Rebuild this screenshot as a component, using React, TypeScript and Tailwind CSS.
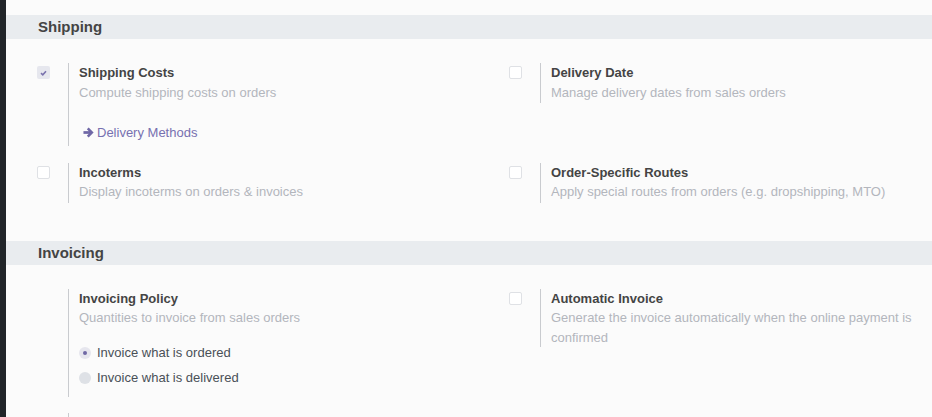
import type { ReactNode } from 'react'

function Checkbox({ checked = false }: { checked?: boolean }) {
  if (checked) {
    return (
      <span className="flex h-[13px] w-[13px] items-center justify-center rounded-[2px] bg-[#e6e7ee]">
        <svg width="7" height="6" viewBox="0 0 7 6">
          <path d="M1 3.2 L2.8 4.8 L6 1.2" fill="none" stroke="#7a72ad" strokeWidth="1.6" />
        </svg>
      </span>
    )
  }
  return <span className="block h-[13px] w-[13px] rounded-[2px] border border-[#dfe1e5] bg-white" />
}

function Radio({ checked = false, label }: { checked?: boolean; label: string }) {
  return (
    <div className="flex h-[25px] items-center gap-[6px]">
      {checked ? (
        <span className="flex h-[12px] w-[12px] items-center justify-center rounded-full bg-[#e6e6ee]">
          <span className="h-[4px] w-[4px] rounded-full bg-[#6f68a4]" />
        </span>
      ) : (
        <span className="h-[12px] w-[12px] rounded-full bg-[#dee1e6]" />
      )}
      <span className="text-[13px] leading-[19.5px] text-[#495057]">{label}</span>
    </div>
  )
}

interface SettingProps {
  title?: string
  description?: string
  checkbox?: 'on' | 'off' | 'none'
  children?: ReactNode
}

function Setting({ title, description, checkbox = 'off', children }: SettingProps) {
  return (
    <div className="flex">
      <div className="w-[31px] shrink-0 pt-[3px]">
        {checkbox !== 'none' && <Checkbox checked={checkbox === 'on'} />}
      </div>
      <div className="min-h-[40px] border-l border-[#c9cbcf] pl-[10px]">
        {title && <div className="text-[13px] font-bold leading-[19.5px] text-[#444]">{title}</div>}
        {description && <div className="text-[13px] leading-[19.5px] text-[#b3b6bd]">{description}</div>}
        {children}
      </div>
    </div>
  )
}

function SectionHeader({ title }: { title: string }) {
  return (
    <div className="h-[24px] bg-[#e9ecef] pl-[32px] text-[15px] font-bold leading-[24px] text-[#444]">{title}</div>
  )
}

export default function App() {
  return (
    <div className="flex h-[417px] overflow-hidden bg-[#fbfbfb] font-['Liberation_Sans',Arial,sans-serif]">
      <div className="w-[6px] shrink-0 bg-[#212529]" />
      <div className="flex-1 pt-[15px]">
        <SectionHeader title="Shipping" />
        <div className="grid grid-cols-[472px_1fr] gap-y-[17px] pt-[24px] pb-[38px] pl-[31px] pr-[16px]">
          <Setting checkbox="on" title="Shipping Costs" description="Compute shipping costs on orders">
            <div className="mt-[21px] flex items-center pb-[3px] pl-[4px] text-[13px] leading-[19.5px] text-[#7770b0]">
              <svg width="11" height="11" viewBox="0 0 12 12" className="mr-[3px]">
                <path d="M0.5 6 H9" fill="none" stroke="#6f67a6" strokeWidth="3" />
                <path d="M5.2 1.6 L9.6 6 L5.2 10.4" fill="none" stroke="#6f67a6" strokeWidth="2.8" />
              </svg>
              Delivery Methods
            </div>
          </Setting>
          <div className="self-start">
            <Setting title="Delivery Date" description="Manage delivery dates from sales orders" />
          </div>
          <Setting title="Incoterms" description="Display incoterms on orders & invoices" />
          <Setting title="Order-Specific Routes" description="Apply special routes from orders (e.g. dropshipping, MTO)" />
        </div>

        <SectionHeader title="Invoicing" />
        <div className="grid grid-cols-[472px_1fr] gap-y-[16px] pt-[24px] pl-[31px] pr-[16px]">
          <Setting checkbox="none" title="Invoicing Policy" description="Quantities to invoice from sales orders">
            <div className="mt-[13px] pb-[6px]">
              <Radio checked label="Invoice what is ordered" />
              <Radio label="Invoice what is delivered" />
            </div>
          </Setting>
          <div className="self-start">
            <Setting
              title="Automatic Invoice"
              description="Generate the invoice automatically when the online payment is confirmed"
            />
          </div>
          <Setting checkbox="none" />
        </div>
      </div>
    </div>
  )
}
